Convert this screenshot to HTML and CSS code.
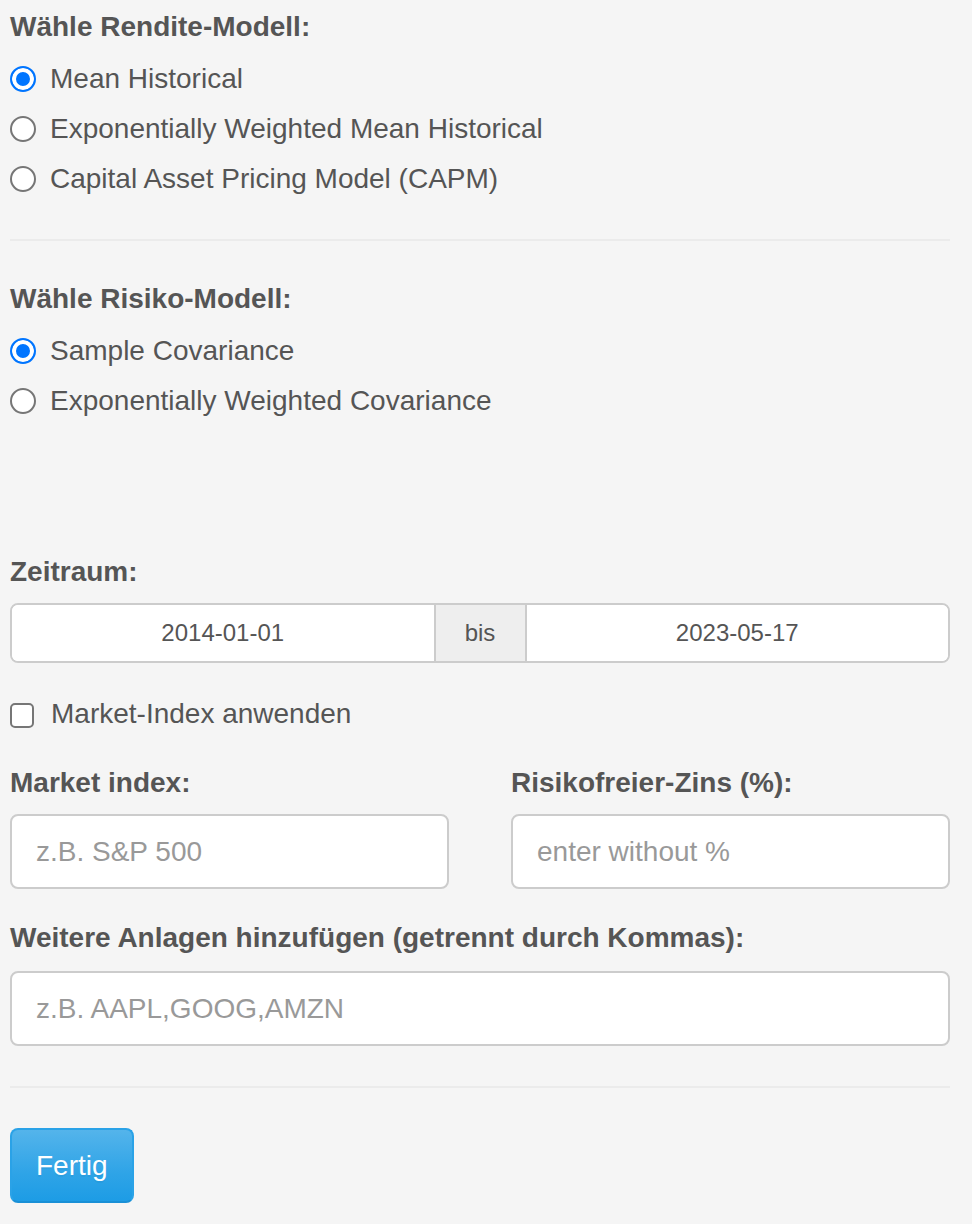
FILE: index.html
```html
<!DOCTYPE html>
<html lang="de">
<head>
<meta charset="utf-8">
<title>Portfolio</title>
<link rel="stylesheet" href="styles.css">
</head>
<body>
<div class="panel">
  <div class="form-group">
    <label class="ctl-label group-label">Wähle Rendite-Modell:</label>
    <div class="options">
      <label class="radio"><input type="radio" name="ret" checked><span>Mean Historical</span></label>
      <label class="radio"><input type="radio" name="ret"><span>Exponentially Weighted Mean Historical</span></label>
      <label class="radio"><input type="radio" name="ret"><span>Capital Asset Pricing Model (CAPM)</span></label>
    </div>
  </div>
  <hr class="divider first">
  <div class="form-group">
    <label class="ctl-label group-label">Wähle Risiko-Modell:</label>
    <div class="options">
      <label class="radio"><input type="radio" name="risk" checked><span>Sample Covariance</span></label>
      <label class="radio"><input type="radio" name="risk"><span>Exponentially Weighted Covariance</span></label>
    </div>
  </div>
  <div class="form-group period">
    <label class="ctl-label date-label">Zeitraum:</label>
    <div class="daterange">
      <input class="date" type="text" value="2014-01-01">
      <span class="addon">bis</span>
      <input class="date" type="text" value="2023-05-17">
    </div>
  </div>
  <label class="check"><input type="checkbox"><span>Market-Index anwenden</span></label>
  <div class="row">
    <div class="col">
      <label class="ctl-label field-label">Market index:</label>
      <input class="field" type="text" placeholder="z.B. S&amp;P 500">
    </div>
    <div class="col">
      <label class="ctl-label field-label">Risikofreier-Zins (%):</label>
      <input class="field" type="text" placeholder="enter without %">
    </div>
  </div>
  <div class="form-group more">
    <label class="ctl-label more-label">Weitere Anlagen hinzufügen (getrennt durch Kommas):</label>
    <input class="field" type="text" placeholder="z.B. AAPL,GOOG,AMZN">
  </div>
  <hr class="divider last">
  <button class="btn-primary" type="button">Fertig</button>
</div>
</body>
</html>
```

FILE: styles.css
```css
html, body {
  margin: 0;
  padding: 0;
  background: #f5f5f5;
}
body {
  font-family: "Liberation Sans", Arial, Helvetica, sans-serif;
  font-size: 28px;
  line-height: 40px;
  color: #555555;
}
.panel {
  padding: 7px 22px 20px 10px;
}
.ctl-label {
  display: block;
  font-weight: bold;
  margin-bottom: 10px;
}
.group-label {
  margin-bottom: 12px;
}
.options {
  display: flex;
  flex-direction: column;
  gap: 10px;
}
.radio, .check {
  display: flex;
  align-items: center;
  height: 40px;
  gap: 14px;
  cursor: pointer;
}
.radio input {
  appearance: none;
  -webkit-appearance: none;
  margin: 0;
  width: 26px;
  height: 26px;
  border-radius: 50%;
  border: 2px solid #767676;
  background: #ffffff;
  box-sizing: border-box;
  flex: none;
}
.radio input:checked {
  border-color: #0075ff;
  background: #0075ff;
  box-shadow: inset 0 0 0 4px #ffffff;
}
.check input {
  appearance: none;
  -webkit-appearance: none;
  margin: 2px 3px 0 0;
  width: 24px;
  height: 25px;
  border-radius: 5px;
  border: 2px solid #767676;
  background: #ffffff;
  box-sizing: border-box;
  flex: none;
}
.check {
  margin-top: 31px;
}
.divider {
  border: 0;
  border-top: 2px solid #ebebeb;
  height: 0;
}
.divider.first {
  margin: 40px 0 38px;
}
.divider.last {
  margin: 40px 0 40px;
}
.period {
  margin-top: 131px;
}
.date-label {
  margin-bottom: 11px;
}
.daterange {
  display: flex;
  height: 60px;
  box-sizing: border-box;
  border: 2px solid #cccccc;
  border-radius: 8px;
  overflow: hidden;
  background: #ffffff;
}
.date {
  flex: 1 1 0;
  min-width: 0;
  border: 0;
  margin: 0;
  padding: 0;
  font-family: inherit;
  font-size: 24px;
  color: #555555;
  text-align: center;
  background: #ffffff;
  outline: none;
}
.addon {
  flex: none;
  width: 93px;
  box-sizing: border-box;
  border-left: 2px solid #cccccc;
  border-right: 2px solid #cccccc;
  background: #eeeeee;
  font-size: 24px;
  display: flex;
  align-items: center;
  justify-content: center;
}
.row {
  display: grid;
  grid-template-columns: 1fr 1fr;
  column-gap: 62px;
  margin-top: 29px;
}
.field-label {
  margin-bottom: 11px;
}
.field {
  display: block;
  width: 100%;
  height: 75px;
  box-sizing: border-box;
  margin: 0;
  padding: 0 24px;
  border: 2px solid #cccccc;
  border-radius: 8px;
  background: #ffffff;
  font-family: inherit;
  font-size: 28px;
  line-height: 40px;
  color: #555555;
  outline: none;
}
.field::placeholder {
  color: #999999;
  opacity: 1;
}
.more {
  margin-top: 29px;
}
.more-label {
  margin-bottom: 13px;
}
.btn-primary {
  display: block;
  height: 75px;
  padding: 0 24px;
  margin: 0;
  border: 2px solid #2aa2e7;
  border-bottom-color: #1a90d6;
  border-radius: 8px;
  background-color: #2fa4e7;
  background-image: linear-gradient(#54b4eb, #2fa4e7 60%, #1d9ce5);
  color: #ffffff;
  font-family: inherit;
  font-size: 28px;
  line-height: 40px;
  text-shadow: 0 2px 0 rgba(0, 0, 0, 0.05);
  cursor: pointer;
}
```
